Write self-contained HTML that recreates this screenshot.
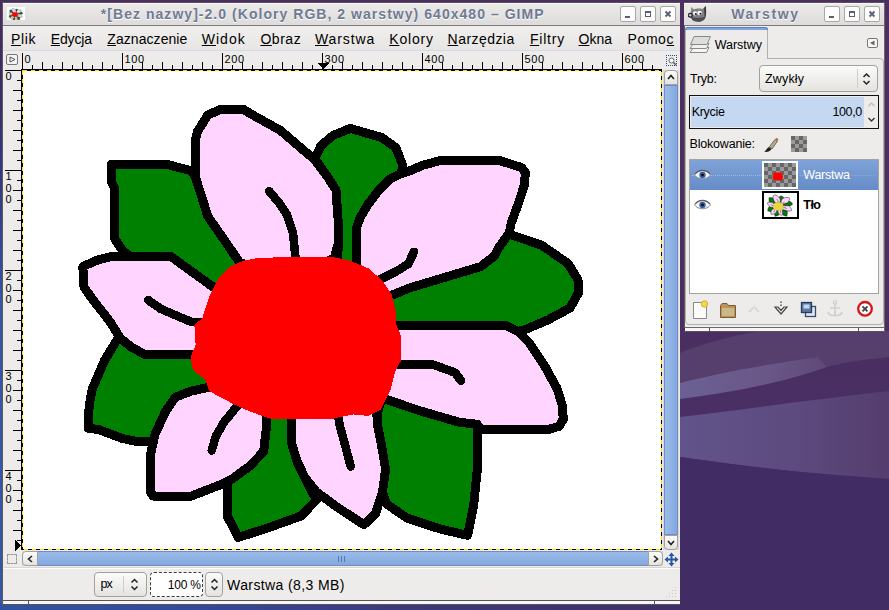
<!DOCTYPE html>
<html><head><meta charset="utf-8">
<style>
html,body{margin:0;padding:0;}
body{width:889px;height:610px;overflow:hidden;position:relative;background:#4b2d60;font-family:"Liberation Sans",sans-serif;}
.abs{position:absolute;}
.t{position:absolute;white-space:nowrap;color:#000;line-height:1;transform-origin:0 0;}
.win{background:#edecea;}
.titlebar{left:0;top:0;height:22px;background:linear-gradient(#ecebea,#dddcda);border-bottom:1px solid #7d7b80;box-shadow:inset 0 1px 0 #f8f8f7;}
.wbtn{position:absolute;width:14px;height:14px;background:#fcfcfc;border:1px solid #a9a7a2;border-radius:2px;}
.menubar{left:0;top:23px;height:24px;background:linear-gradient(#f0efed,#e7e6e4);border-bottom:1px solid #d5dbe6;}
.btn{position:absolute;background:linear-gradient(#fbfbfa,#e4e3e0);border:1px solid #a3a19b;border-radius:4px;box-sizing:border-box;}
.sb{position:absolute;background:linear-gradient(#9dbdeb,#86a9df);}
</style></head><body>

<svg class="abs" style="left:0;top:0" width="889" height="610">
<defs>
<linearGradient id="lg" x1="0" y1="0" x2="0" y2="1"><stop offset="0" stop-color="#4a2c5e"/><stop offset="0.12" stop-color="#3a2c62"/><stop offset="0.3" stop-color="#333a80"/><stop offset="0.5" stop-color="#3556a4"/><stop offset="1" stop-color="#3458a6"/></linearGradient>
<linearGradient id="sw1" x1="0" y1="0" x2="1" y2="0"><stop offset="0" stop-color="#6b6094"/><stop offset="0.6" stop-color="#6a5787"/><stop offset="1" stop-color="#5f4877"/></linearGradient>
<linearGradient id="sw2" x1="0" y1="0" x2="1" y2="0"><stop offset="0" stop-color="#61548b"/><stop offset="0.55" stop-color="#5d4a7e"/><stop offset="1" stop-color="#553d6e"/></linearGradient>
<linearGradient id="dk" x1="0" y1="0" x2="0" y2="1"><stop offset="0" stop-color="#4c2e60"/><stop offset="0.5" stop-color="#4c2e60"/><stop offset="1" stop-color="#42306a"/></linearGradient>
<linearGradient id="bs" x1="0" y1="0" x2="1" y2="0"><stop offset="0" stop-color="#2f53a2"/><stop offset="0.3" stop-color="#35489a"/><stop offset="0.6" stop-color="#3d3878"/><stop offset="1" stop-color="#402f68"/></linearGradient>
</defs>
<rect x="0" y="0" width="889" height="610" fill="url(#dk)"/>
<rect x="0" y="0" width="10" height="610" fill="url(#lg)"/>
<rect x="0" y="604" width="684" height="6" fill="url(#bs)"/>
<!-- right desktop swooshes -->
<path d="M680,353 C700,345 730,335 765,331 L889,331 L889,357 C860,360 840,363 827,367 L818,357 C790,361 740,368 680,383 Z" fill="#563f6d"/>
<path d="M680,383 C740,368 790,361 818,357 L827,367 C800,376 760,389 680,399 Z" fill="url(#sw1)"/>
<path d="M680,417 C754,408 818,399 889,391 L889,479 C850,476 790,473 682,457 L680,457 Z" fill="url(#sw2)"/>
<path d="M680,457 C790,473 850,476 889,479 L889,610 L680,610 Z" fill="#412d63"/>
</svg>

<div class="abs win" style="left:2px;top:3px;width:678px;height:602px;border-left:1px solid #5a5862;box-sizing:border-box"></div>
<div class="abs titlebar" style="left:3px;top:3px;width:677px"></div>
<div class="abs" style="left:2px;top:2px;width:678px;height:1px;background:#55535c"></div><div class="abs" style="left:684px;top:2px;width:201px;height:1px;background:#55535c"></div>
<svg class="abs" style="left:7px;top:7px" width="18" height="13"><rect width="18" height="13" fill="#fff"/><g transform="translate(0.3,0.3) scale(0.0275) translate(-22,-70)"><use href="#fl"/><use href="#blob" fill="#f00" stroke="#f00"/></g></svg>
<div class="wbtn" style="left:620px;top:6px"></div><div class="abs" style="left:625px;top:16px;width:5px;height:2px;background:#5a5f74"></div><div class="wbtn" style="left:640px;top:6px"></div><div class="abs" style="left:645px;top:11px;width:4px;height:3px;border:1px solid #5a5f74;border-top-width:2px"></div><div class="wbtn" style="left:660px;top:6px"></div><svg class="abs" style="left:664px;top:10px" width="8" height="8"><path d="M1.5,1.5 L6.5,6.5 M6.5,1.5 L1.5,6.5" stroke="#5a5f74" stroke-width="1.8"/></svg>
<div class="abs menubar" style="left:3px;top:3px;width:677px;margin-top:23px;top:3px"></div>
<div class="abs" style="left:4px;top:51px;width:676px;height:19px;background:#edecea"></div>
<svg class="abs" style="left:0;top:0" width="700" height="570" shape-rendering="crispEdges"><rect x="22" y="53" width="1" height="17" fill="#000"/><rect x="32" y="65" width="1" height="5" fill="#000"/><rect x="42" y="62" width="1" height="8" fill="#000"/><rect x="52" y="65" width="1" height="5" fill="#000"/><rect x="62" y="62" width="1" height="8" fill="#000"/><rect x="72" y="65" width="1" height="5" fill="#000"/><rect x="82" y="62" width="1" height="8" fill="#000"/><rect x="92" y="65" width="1" height="5" fill="#000"/><rect x="102" y="62" width="1" height="8" fill="#000"/><rect x="112" y="65" width="1" height="5" fill="#000"/><rect x="122" y="53" width="1" height="17" fill="#000"/><rect x="132" y="65" width="1" height="5" fill="#000"/><rect x="142" y="62" width="1" height="8" fill="#000"/><rect x="152" y="65" width="1" height="5" fill="#000"/><rect x="162" y="62" width="1" height="8" fill="#000"/><rect x="172" y="65" width="1" height="5" fill="#000"/><rect x="182" y="62" width="1" height="8" fill="#000"/><rect x="192" y="65" width="1" height="5" fill="#000"/><rect x="202" y="62" width="1" height="8" fill="#000"/><rect x="212" y="65" width="1" height="5" fill="#000"/><rect x="222" y="53" width="1" height="17" fill="#000"/><rect x="232" y="65" width="1" height="5" fill="#000"/><rect x="242" y="62" width="1" height="8" fill="#000"/><rect x="252" y="65" width="1" height="5" fill="#000"/><rect x="262" y="62" width="1" height="8" fill="#000"/><rect x="272" y="65" width="1" height="5" fill="#000"/><rect x="282" y="62" width="1" height="8" fill="#000"/><rect x="292" y="65" width="1" height="5" fill="#000"/><rect x="302" y="62" width="1" height="8" fill="#000"/><rect x="312" y="65" width="1" height="5" fill="#000"/><rect x="322" y="53" width="1" height="17" fill="#000"/><rect x="332" y="65" width="1" height="5" fill="#000"/><rect x="342" y="62" width="1" height="8" fill="#000"/><rect x="352" y="65" width="1" height="5" fill="#000"/><rect x="362" y="62" width="1" height="8" fill="#000"/><rect x="372" y="65" width="1" height="5" fill="#000"/><rect x="382" y="62" width="1" height="8" fill="#000"/><rect x="392" y="65" width="1" height="5" fill="#000"/><rect x="402" y="62" width="1" height="8" fill="#000"/><rect x="412" y="65" width="1" height="5" fill="#000"/><rect x="422" y="53" width="1" height="17" fill="#000"/><rect x="432" y="65" width="1" height="5" fill="#000"/><rect x="442" y="62" width="1" height="8" fill="#000"/><rect x="452" y="65" width="1" height="5" fill="#000"/><rect x="462" y="62" width="1" height="8" fill="#000"/><rect x="472" y="65" width="1" height="5" fill="#000"/><rect x="482" y="62" width="1" height="8" fill="#000"/><rect x="492" y="65" width="1" height="5" fill="#000"/><rect x="502" y="62" width="1" height="8" fill="#000"/><rect x="512" y="65" width="1" height="5" fill="#000"/><rect x="522" y="53" width="1" height="17" fill="#000"/><rect x="532" y="65" width="1" height="5" fill="#000"/><rect x="542" y="62" width="1" height="8" fill="#000"/><rect x="552" y="65" width="1" height="5" fill="#000"/><rect x="562" y="62" width="1" height="8" fill="#000"/><rect x="572" y="65" width="1" height="5" fill="#000"/><rect x="582" y="62" width="1" height="8" fill="#000"/><rect x="592" y="65" width="1" height="5" fill="#000"/><rect x="602" y="62" width="1" height="8" fill="#000"/><rect x="612" y="65" width="1" height="5" fill="#000"/><rect x="622" y="53" width="1" height="17" fill="#000"/><rect x="632" y="65" width="1" height="5" fill="#000"/><rect x="642" y="62" width="1" height="8" fill="#000"/><rect x="652" y="65" width="1" height="5" fill="#000"/><rect x="5" y="70" width="17" height="1" fill="#000"/><rect x="17" y="80" width="5" height="1" fill="#000"/><rect x="13" y="90" width="9" height="1" fill="#000"/><rect x="17" y="100" width="5" height="1" fill="#000"/><rect x="13" y="110" width="9" height="1" fill="#000"/><rect x="17" y="120" width="5" height="1" fill="#000"/><rect x="13" y="130" width="9" height="1" fill="#000"/><rect x="17" y="140" width="5" height="1" fill="#000"/><rect x="13" y="150" width="9" height="1" fill="#000"/><rect x="17" y="160" width="5" height="1" fill="#000"/><rect x="5" y="170" width="17" height="1" fill="#000"/><rect x="17" y="180" width="5" height="1" fill="#000"/><rect x="13" y="190" width="9" height="1" fill="#000"/><rect x="17" y="200" width="5" height="1" fill="#000"/><rect x="13" y="210" width="9" height="1" fill="#000"/><rect x="17" y="220" width="5" height="1" fill="#000"/><rect x="13" y="230" width="9" height="1" fill="#000"/><rect x="17" y="240" width="5" height="1" fill="#000"/><rect x="13" y="250" width="9" height="1" fill="#000"/><rect x="17" y="260" width="5" height="1" fill="#000"/><rect x="5" y="270" width="17" height="1" fill="#000"/><rect x="17" y="280" width="5" height="1" fill="#000"/><rect x="13" y="290" width="9" height="1" fill="#000"/><rect x="17" y="300" width="5" height="1" fill="#000"/><rect x="13" y="310" width="9" height="1" fill="#000"/><rect x="17" y="320" width="5" height="1" fill="#000"/><rect x="13" y="330" width="9" height="1" fill="#000"/><rect x="17" y="340" width="5" height="1" fill="#000"/><rect x="13" y="350" width="9" height="1" fill="#000"/><rect x="17" y="360" width="5" height="1" fill="#000"/><rect x="5" y="370" width="17" height="1" fill="#000"/><rect x="17" y="380" width="5" height="1" fill="#000"/><rect x="13" y="390" width="9" height="1" fill="#000"/><rect x="17" y="400" width="5" height="1" fill="#000"/><rect x="13" y="410" width="9" height="1" fill="#000"/><rect x="17" y="420" width="5" height="1" fill="#000"/><rect x="13" y="430" width="9" height="1" fill="#000"/><rect x="17" y="440" width="5" height="1" fill="#000"/><rect x="13" y="450" width="9" height="1" fill="#000"/><rect x="17" y="460" width="5" height="1" fill="#000"/><rect x="5" y="470" width="17" height="1" fill="#000"/><rect x="17" y="480" width="5" height="1" fill="#000"/><rect x="13" y="490" width="9" height="1" fill="#000"/><rect x="17" y="500" width="5" height="1" fill="#000"/><rect x="13" y="510" width="9" height="1" fill="#000"/><rect x="17" y="520" width="5" height="1" fill="#000"/><rect x="13" y="530" width="9" height="1" fill="#000"/><rect x="17" y="540" width="5" height="1" fill="#000"/><polygon points="318,63 329,63 323.5,69.5" fill="#000"/><rect x="21" y="69" width="641" height="1" fill="#000"/><rect x="21" y="69" width="1" height="481" fill="#000"/><polygon points="15,540 15,551 21,545.5" fill="#000"/></svg>
<div class="abs" style="left:6px;top:54px;width:12px;height:11px;border:1px solid #777;border-radius:2px;box-sizing:border-box;background:#f4f4f3"></div><svg class="abs" style="left:9px;top:56px" width="7" height="7"><polygon points="1,1 6,3.5 1,6" fill="none" stroke="#555" stroke-width="1"/></svg>
<div class="abs" style="left:666px;top:55px;width:11px;height:11px;border:1px dotted #2a4a8a;box-sizing:border-box"></div><svg class="abs" style="left:668px;top:57px" width="9" height="9"><circle cx="3.5" cy="3.5" r="2.5" fill="#fff" stroke="#666" stroke-width="1"/><path d="M5.5,5.5 L8,8" stroke="#555" stroke-width="1.5"/></svg>
<svg class="abs" style="left:22px;top:70px;background:#fff" width="640" height="480" viewBox="22 70 640 480" shape-rendering="crispEdges">
<g id="fl">
<polygon points="111.5,164.2 166.0,164.2 190.5,170.5 195.0,176.0 201.6,196.2 207.7,216.2 226.0,242.5 240.0,263.0 235.0,295.0 215.8,289.0 171.2,256.7 130.7,256.7 122.6,250.6 114.5,238.5 114.5,188.0 111.5,182.0" fill="#008000" stroke="#000" stroke-width="9" stroke-linejoin="round"/>
<polygon points="116.6,340.5 104.4,360.7 92.3,389.0 89.2,405.3 88.2,428.3 98.3,429.4 122.6,438.5 136.8,441.5 153.0,441.5 155.0,434.4 165.2,412.0 175.3,397.2 191.5,391.0 215.0,386.0 210.0,354.7 145.0,354.7 130.7,346.6 120.6,338.5" fill="#008000" stroke="#000" stroke-width="9" stroke-linejoin="round"/>
<polygon points="227.2,481.7 227.2,516.0 238.3,537.4 266.7,528.3 301.0,516.0 316.3,500.0 305.0,477.6 297.0,461.4 291.0,441.2 291.0,405.0 267.0,405.0 266.7,425.0 263.7,451.3 250.5,465.5 232.0,479.0" fill="#008000" stroke="#000" stroke-width="9" stroke-linejoin="round"/>
<polygon points="382.0,398.0 378.0,411.0 377.5,425.0 381.5,445.2 385.6,469.5 382.5,491.8 386.6,504.0 406.8,518.0 441.2,529.3 467.6,535.3 473.6,506.0 477.7,465.5 477.7,429.0 477.3,424.3 459.0,422.2 420.6,411.0" fill="#008000" stroke="#000" stroke-width="9" stroke-linejoin="round"/>
<polygon points="385.0,298.0 410.0,287.8 480.9,266.5 495.0,255.4 499.0,247.3 509.2,233.0 513.0,235.5 541.6,245.2 568.0,263.5 578.0,279.7 579.0,291.8 570.0,308.0 547.7,320.0 523.4,330.3 517.3,331.3 505.0,325.2 385.0,325.2" fill="#008000" stroke="#000" stroke-width="9" stroke-linejoin="round"/>
<polygon points="314.8,158.8 320.9,145.6 333.0,135.5 350.2,128.4 381.6,137.5 395.8,147.6 402.9,165.9 401.0,173.5 390.0,179.0 379.0,190.0 367.5,205.0 360.0,218.0 356.3,228.5 356.3,270.0 337.0,268.0 338.5,242.6 338.0,218.0 335.0,190.0 327.0,176.0" fill="#008000" stroke="#000" stroke-width="9" stroke-linejoin="round"/>
<polygon points="240.0,263.0 226.0,242.5 207.7,216.2 201.6,196.2 195.0,176.0 195.0,141.6 197.5,131.4 207.7,115.2 219.8,109.6 244.0,109.6 250.0,113.5 280.4,130.4 314.8,159.8 327.0,176.0 336.0,190.0 338.0,218.0 338.5,242.6 334.4,257.8 300.0,275.0" fill="#ffd5ff" stroke="#000" stroke-width="9" stroke-linejoin="round"/>
<polygon points="110.5,256.7 98.3,259.7 82.8,266.5 84.0,287.0 93.0,300.0 102.5,312.0 110.8,323.0 120.6,338.5 130.7,346.6 145.0,354.7 205.0,354.7 225.0,300.0 215.8,289.0 171.2,256.7" fill="#ffd5ff" stroke="#000" stroke-width="9" stroke-linejoin="round"/>
<polygon points="215.0,386.0 191.5,391.0 175.3,397.2 165.2,412.0 155.0,434.4 150.0,456.7 150.0,491.0 153.0,496.0 191.5,496.0 219.8,485.0 232.0,479.0 250.5,465.5 263.7,451.3 266.7,425.0 267.0,405.0 240.0,395.0" fill="#ffd5ff" stroke="#000" stroke-width="9" stroke-linejoin="round"/>
<polygon points="291.0,405.0 291.0,441.2 297.0,461.4 305.0,477.6 316.3,491.8 335.5,506.0 363.9,524.7 375.4,514.0 382.5,491.8 385.6,469.5 381.5,445.2 377.5,425.0 376.0,400.0" fill="#ffd5ff" stroke="#000" stroke-width="9" stroke-linejoin="round"/>
<polygon points="385.0,325.2 505.7,325.2 518.7,332.0 528.8,342.3 545.0,366.6 557.2,388.8 562.2,405.0 563.3,419.2 559.2,426.3 549.0,429.3 480.2,429.3 477.3,424.3 459.0,422.2 420.6,411.0 382.0,398.0 375.0,360.0" fill="#ffd5ff" stroke="#000" stroke-width="9" stroke-linejoin="round"/>
<polygon points="356.3,270.0 356.3,228.5 360.0,218.0 367.5,205.0 379.0,190.0 390.0,179.0 399.8,174.0 412.0,170.0 422.0,165.5 430.0,163.4 440.4,160.4 499.0,160.4 521.4,167.5 525.4,172.5 524.4,184.7 519.3,200.9 511.2,223.0 509.2,233.0 499.0,247.3 495.0,255.4 480.9,266.5 410.0,287.8 385.0,298.0" fill="#ffd5ff" stroke="#000" stroke-width="9" stroke-linejoin="round"/>
<polyline points="269.0,191.0 280.0,204.0 287.0,215.0 293.0,233.0 295.5,258.0" fill="none" stroke="#000" stroke-width="8.6" stroke-linejoin="round" stroke-linecap="round"/>
<polyline points="148.0,300.0 161.0,309.0 175.0,315.0 191.5,322.0 205.0,322.0" fill="none" stroke="#000" stroke-width="8.6" stroke-linejoin="round" stroke-linecap="round"/>
<polyline points="238.0,405.0 223.9,422.3 215.8,436.4 211.7,450.6" fill="none" stroke="#000" stroke-width="8.6" stroke-linejoin="round" stroke-linecap="round"/>
<polyline points="336.0,400.0 339.6,425.0 345.7,447.3 350.7,466.5" fill="none" stroke="#000" stroke-width="8.6" stroke-linejoin="round" stroke-linecap="round"/>
<polyline points="385.0,364.5 432.8,364.5 455.0,372.6 461.0,380.7" fill="none" stroke="#000" stroke-width="8.6" stroke-linejoin="round" stroke-linecap="round"/>
<polyline points="414.0,251.8 408.3,263.9 397.0,271.0 375.0,282.0" fill="none" stroke="#000" stroke-width="8.6" stroke-linejoin="round" stroke-linecap="round"/>
</g>
<defs><polygon id="blob" points="258.9,258.7 331.7,257.7 349.9,261.7 368.1,269.3 381.8,281.4 390.9,295.1 395.4,314.8 394.8,323.9 400.0,336.0 400.0,360.3 393.9,372.4 389.3,390.6 380.2,408.8 368.1,414.9 352.9,413.4 331.7,417.9 271.0,417.9 249.8,410.4 233.1,402.8 210.3,390.6 205.8,378.5 193.7,369.4 191.5,357.3 196.7,345.1 195.4,325.5 203.3,318.5 206.5,308.0 210.3,296.6 219.4,278.4 230.0,267.8 243.7,261.7" stroke-width="2" stroke-linejoin="round"/></defs><use href="#blob" fill="#ff0000" stroke="#ff0000"/>
<rect x="22.5" y="70.5" width="639" height="479" fill="none" stroke="#000" stroke-width="1"/><rect x="22.5" y="70.5" width="639" height="479" fill="none" stroke="#ffe000" stroke-width="1" stroke-dasharray="4 4"/>
</svg>
<div class="abs" style="left:663px;top:70px;width:16px;height:480px;background:#d9d8d5"></div>
<div class="sb" style="left:664px;top:85px;width:14px;height:450px;background:linear-gradient(90deg,#9bbbea,#84a8de);border:1px solid #6d8fc5;box-sizing:border-box"></div>
<div class="btn" style="left:664px;top:70px;width:14px;height:15px;border-radius:4px 4px 0 0"></div><svg class="abs" style="left:667px;top:74px" width="8" height="6"><path d="M1,5 L4,1.5 L7,5" fill="none" stroke="#222" stroke-width="1.6"/></svg>
<div class="btn" style="left:664px;top:535px;width:14px;height:15px;border-radius:0 0 4px 4px"></div><svg class="abs" style="left:667px;top:540px" width="8" height="6"><path d="M1,1 L4,4.5 L7,1" fill="none" stroke="#222" stroke-width="1.6"/></svg>
<div class="abs" style="left:22px;top:551px;width:641px;height:15px;background:#d9d8d5"></div>
<div class="sb" style="left:37px;top:551px;width:612px;height:15px;background:linear-gradient(#9bbbea,#84a8de);border:1px solid #6d8fc5;box-sizing:border-box"></div>
<div class="btn" style="left:22px;top:551px;width:16px;height:15px;border-radius:4px 0 0 4px"></div><svg class="abs" style="left:27px;top:555px" width="6" height="8"><path d="M5,1 L1.5,4 L5,7" fill="none" stroke="#222" stroke-width="1.6"/></svg>
<div class="btn" style="left:648px;top:551px;width:15px;height:15px;border-radius:0 4px 4px 0"></div><svg class="abs" style="left:653px;top:555px" width="6" height="8"><path d="M1,1 L4.5,4 L1,7" fill="none" stroke="#222" stroke-width="1.6"/></svg>
<svg class="abs" style="left:337px;top:556px" width="8" height="6"><path d="M1.5,0 V6 M4.5,0 V6 M7.5,0 V6" stroke="#5577b5" stroke-width="1"/></svg>
<div class="abs" style="left:7px;top:554px;width:10px;height:10px;border:1px dashed #999;box-sizing:border-box"></div>
<svg class="abs" style="left:664px;top:552px" width="15" height="15" viewBox="0 0 15 15"><path d="M7.5,0.5 L10.5,4 H8.5 V6.5 H11 V4.5 L14.5,7.5 L11,10.5 V8.5 H8.5 V11 H10.5 L7.5,14.5 L4.5,11 H6.5 V8.5 H4 V10.5 L0.5,7.5 L4,4.5 V6.5 H6.5 V4 H4.5 Z" fill="#2a55a5"/></svg>
<div class="abs" style="left:4px;top:567px;width:676px;height:1px;background:#d8d6cf"></div><div class="abs" style="left:4px;top:568px;width:676px;height:1px;background:#fff"></div>
<div class="btn" style="left:94px;top:572px;width:53px;height:25px"></div><div class="abs" style="left:123px;top:576px;width:1px;height:17px;background:#cfcdc8"></div>
<svg class="abs" style="left:130px;top:578px" width="9" height="13"><path d="M1.5,4.5 L4.5,1.5 L7.5,4.5 M1.5,8.5 L4.5,11.5 L7.5,8.5" fill="none" stroke="#222" stroke-width="1.5"/></svg>
<div class="abs" style="left:150px;top:572px;width:53px;height:25px;background:#fff;border:1px dashed #3a3a3a;border-radius:4px;box-sizing:border-box"></div>
<div class="btn" style="left:205px;top:572px;width:18px;height:25px"></div><svg class="abs" style="left:210px;top:578px" width="9" height="13"><path d="M1.5,4.5 L4.5,1.5 L7.5,4.5 M1.5,8.5 L4.5,11.5 L7.5,8.5" fill="none" stroke="#222" stroke-width="1.5"/></svg>
<div class="abs" style="left:3px;top:600px;width:677px;height:1px;background:#55535a"></div><div class="abs" style="left:4px;top:601px;width:676px;height:3px;background:#f7f6f4"></div><div class="abs" style="left:3px;top:604px;width:677px;height:1px;background:#55535a"></div>
<div class="abs" style="left:28px;top:601px;width:1px;height:3px;background:#55535a"></div><div class="abs" style="left:654px;top:601px;width:1px;height:3px;background:#55535a"></div>
<svg class="abs" style="left:666px;top:586px" width="12" height="12"><g fill="#c9c7c2"><rect x="9" y="1" width="1" height="1"/><rect x="6" y="4" width="1" height="1"/><rect x="9" y="4" width="1" height="1"/><rect x="3" y="7" width="1" height="1"/><rect x="6" y="7" width="1" height="1"/><rect x="9" y="7" width="1" height="1"/><rect x="0" y="10" width="1" height="1"/><rect x="3" y="10" width="1" height="1"/><rect x="6" y="10" width="1" height="1"/><rect x="9" y="10" width="1" height="1"/></g></svg>
<!-- DOCK WINDOW -->
<div class="abs win" style="left:684px;top:3px;width:201px;height:325px;border-left:1px solid #5a5862;box-sizing:border-box"></div>
<div class="abs titlebar" style="left:684px;top:3px;width:201px"></div>
<!-- wilber -->
<svg class="abs" style="left:688px;top:5px" width="19" height="18" viewBox="0 0 19 18">
<path d="M3.3,2.1 L5.8,4.4 C8,3.2 12,3.2 14.4,3.9 L17.7,0.9 C18.3,4 18.2,8 17.9,11.1 C17.5,13 16.8,14.2 15.7,15 C14,16.5 12,16.8 10.1,16.7 C8,16.7 5.8,16.2 4.4,15 C3,13 2.6,10.5 2.7,8.2 Z" fill="#808080"/>
<path d="M3,11.5 C6,13.2 12,13.4 17.8,11.3 C17.4,13 16.8,14.2 15.7,15 C14,16.5 12,16.8 10.1,16.7 C8,16.7 5.8,16.2 4.4,15 C3.6,14 3.2,12.8 3,11.5 Z" fill="#4d4d55"/>
<path d="M16,3 L17.7,0.9 C18.3,4 18.2,8 17.9,11.1 L16.6,11.6 Z" fill="#3e3b44"/>
<ellipse cx="7.1" cy="8.3" rx="2" ry="2.1" fill="#fff"/><ellipse cx="11.6" cy="8" rx="2.2" ry="2.2" fill="#fff"/>
<circle cx="7.8" cy="8.9" r="1" fill="#111"/><circle cx="12.4" cy="8.8" r="1" fill="#111"/>
<ellipse cx="2.2" cy="10.2" rx="2" ry="1.9" fill="#c9c6cc" stroke="#2c2238" stroke-width="1.3"/>
</svg>
<div class="wbtn" style="left:824px;top:6px"></div><div class="abs" style="left:829px;top:16px;width:5px;height:2px;background:#5a5f74"></div>
<div class="wbtn" style="left:844px;top:6px"></div><div class="abs" style="left:849px;top:11px;width:4px;height:3px;border:1px solid #5a5f74;border-top-width:2px"></div>
<div class="wbtn" style="left:864px;top:6px"></div><svg class="abs" style="left:868px;top:10px" width="8" height="8"><path d="M1.5,1.5 L6.5,6.5 M6.5,1.5 L1.5,6.5" stroke="#5a5f74" stroke-width="1.8"/></svg>
<!-- notebook page -->
<div class="abs" style="left:685px;top:58px;width:199px;height:267px;border:1px solid #b3b1ab;border-radius:0 4px 4px 4px;box-sizing:border-box;background:#edecea"></div>
<!-- tab -->
<div class="abs" style="left:685px;top:27px;width:83px;height:32px;background:#edecea;border:1px solid #b3b1ab;border-bottom:none;border-radius:4px 4px 0 0;box-sizing:border-box"></div>
<div class="abs" style="left:685px;top:27px;width:83px;height:3px;background:#7fa5dc;border-radius:4px 4px 0 0;border:1px solid #5b82bd;border-bottom:none;box-sizing:border-box"></div>
<!-- layers icon -->
<svg class="abs" style="left:689px;top:34px" width="23" height="20" viewBox="0 0 23 20">
<polygon points="4.5,13.5 20,13.5 17.5,18.5 1,18.5" fill="#f6f6f5" stroke="#8a8a88" stroke-width="1"/>
<polygon points="4.5,9.5 20,9.5 17.5,14.5 1,14.5" fill="#f0f0ef" stroke="#8a8a88" stroke-width="1"/>
<polygon points="5,2.5 21.5,2.5 18,10.5 1.5,10.5" fill="#dcdddc" stroke="#8a8a88" stroke-width="1"/>
</svg>
<div class="abs" style="left:867px;top:38px;width:11px;height:10px;border:1px solid #777;border-radius:2px;box-sizing:border-box;background:#f7f7f6"></div>
<svg class="abs" style="left:869px;top:40px" width="7" height="7"><polygon points="5.5,0.5 5.5,5.5 1,3" fill="#666"/></svg>
<!-- Tryb -->
<div class="btn" style="left:759px;top:65px;width:119px;height:27px"></div>
<div class="abs" style="left:857px;top:69px;width:1px;height:19px;background:#cfcdc8"></div>
<svg class="abs" style="left:862px;top:72px" width="9" height="14"><path d="M1.5,5 L4.5,2 L7.5,5 M1.5,9 L4.5,12 L7.5,9" fill="none" stroke="#222" stroke-width="1.5"/></svg>
<!-- Krycie -->
<div class="abs" style="left:689px;top:95px;width:190px;height:34px;border:1px solid #111;box-sizing:border-box;background:#edecea"></div>
<div class="abs" style="left:691px;top:97px;width:173px;height:30px;background:#c5d8f1"></div>
<svg class="abs" style="left:867px;top:101px" width="9" height="22"><path d="M1.5,5 L4.5,2 L7.5,5" fill="none" stroke="#bbb" stroke-width="1.2"/><path d="M1.5,17 L4.5,20 L7.5,17" fill="none" stroke="#333" stroke-width="1.4"/></svg>
<!-- Blokowanie -->
<svg class="abs" style="left:763px;top:137px" width="17" height="16" viewBox="0 0 17 16"><path d="M1,14.5 C3,14.5 3.5,11 6,10 L8.5,12 C7,15 3,15.5 1,14.5 Z" fill="#222"/><path d="M6.5,9.5 L12,2.5 L14.5,4 L9,12 Z" fill="#b9a78a" stroke="#555" stroke-width="0.8"/><path d="M12,2.5 L13.5,0.8 L15.5,2 L14.5,4 Z" fill="#d36a2a"/></svg>
<svg class="abs" style="left:791px;top:136px" width="16" height="16" shape-rendering="crispEdges"><rect width="16" height="16" fill="#9a9a9a"/><g fill="#666"><rect x="0" y="0" width="4" height="4"/><rect x="8" y="0" width="4" height="4"/><rect x="4" y="4" width="4" height="4"/><rect x="12" y="4" width="4" height="4"/><rect x="0" y="8" width="4" height="4"/><rect x="8" y="8" width="4" height="4"/><rect x="4" y="12" width="4" height="4"/><rect x="12" y="12" width="4" height="4"/></g></svg>
<!-- layer list -->
<div class="abs" style="left:689px;top:159px;width:190px;height:135px;background:#fff;border:1px solid #a5a39d;box-sizing:border-box"></div>
<div class="abs" style="left:690px;top:160px;width:188px;height:30px;background:linear-gradient(#7fa3d8,#658cc8)"></div>
<div class="abs" style="left:692px;top:175px;width:70px;height:1px;border-top:1px dotted #9fb8e0"></div>
<div class="abs" style="left:800px;top:175px;width:76px;height:1px;border-top:1px dotted #88a8d8"></div>
<!-- eyes -->
<svg class="abs" style="left:694px;top:169px" width="17" height="12" viewBox="0 0 17 12"><path d="M0.5,6 C4,0.5 13,0.5 16.5,6 C13,11 4,11 0.5,6 Z" fill="#f4f4f4" stroke="#8a8f9a" stroke-width="1"/><circle cx="8.5" cy="6" r="3.2" fill="#3c62a8"/><circle cx="8.5" cy="6" r="1.4" fill="#111"/><path d="M1,5 C5,0 12,0 16,5" stroke="#555" stroke-width="1.2" fill="none"/></svg>
<svg class="abs" style="left:694px;top:199px" width="17" height="12" viewBox="0 0 17 12"><path d="M0.5,6 C4,0.5 13,0.5 16.5,6 C13,11 4,11 0.5,6 Z" fill="#f4f4f4" stroke="#8a8f9a" stroke-width="1"/><circle cx="8.5" cy="6" r="3.2" fill="#3c62a8"/><circle cx="8.5" cy="6" r="1.4" fill="#111"/><path d="M1,5 C5,0 12,0 16,5" stroke="#555" stroke-width="1.2" fill="none"/></svg>
<!-- thumbs -->
<svg class="abs" style="left:762px;top:161px" width="36" height="28" shape-rendering="crispEdges"><rect width="36" height="28" fill="#fff"/><rect x="2" y="2" width="32" height="24" fill="#9a9a9a"/><g fill="#666"><rect x="2" y="2" width="4" height="4"/><rect x="10" y="2" width="4" height="4"/><rect x="18" y="2" width="4" height="4"/><rect x="26" y="2" width="4" height="4"/><rect x="6" y="6" width="4" height="4"/><rect x="14" y="6" width="4" height="4"/><rect x="22" y="6" width="4" height="4"/><rect x="30" y="6" width="4" height="4"/><rect x="2" y="10" width="4" height="4"/><rect x="10" y="10" width="4" height="4"/><rect x="18" y="10" width="4" height="4"/><rect x="26" y="10" width="4" height="4"/><rect x="6" y="14" width="4" height="4"/><rect x="14" y="14" width="4" height="4"/><rect x="22" y="14" width="4" height="4"/><rect x="30" y="14" width="4" height="4"/><rect x="2" y="18" width="4" height="4"/><rect x="10" y="18" width="4" height="4"/><rect x="18" y="18" width="4" height="4"/><rect x="26" y="18" width="4" height="4"/><rect x="6" y="22" width="4" height="4"/><rect x="14" y="22" width="4" height="4"/><rect x="22" y="22" width="4" height="4"/><rect x="30" y="22" width="4" height="4"/></g><g transform="translate(2,2) scale(0.05) translate(-22,-70)" shape-rendering="auto"><use href="#blob" fill="#f00" stroke="#f00"/></g></svg>
<svg class="abs" style="left:762px;top:191px" width="37" height="28"><rect x="1" y="1" width="35" height="26" fill="#fff" stroke="#000" stroke-width="2"/><g transform="translate(2.5,2) scale(0.05) translate(-22,-70)"><use href="#fl"/><use href="#blob" fill="#e6d640" stroke="#e6d640"/></g></svg>
<!-- bottom buttons -->
<svg class="abs" style="left:690px;top:299px" width="190" height="22" viewBox="690 299 190 22">
<!-- new layer -->
<path d="M693.5,302.5 H703 L706.5,306 V318.5 H693.5 Z" fill="#fbfbfb" stroke="#8a8a88" stroke-width="1"/><circle cx="704.5" cy="304" r="3.2" fill="#f3d94a" stroke="#c5a617" stroke-width="0.8"/>
<!-- folder -->
<path d="M720.5,305.5 L722,303.5 H727 L728.5,305.5 H735.5 V317.5 H720.5 Z" fill="#b8935c" stroke="#7a5c2e" stroke-width="1"/><rect x="722" y="308" width="12" height="8" fill="#c9b98a"/>
<!-- up (disabled) -->
<path d="M749,312 L754,307 L759,312" fill="none" stroke="#d8d8d6" stroke-width="2"/><path d="M754,308 V303" stroke="#e0e0de" stroke-width="1.5" stroke-dasharray="1.5 1.5"/>
<!-- down -->
<path d="M775,307 L781,314 L787,307 L784,307 L781,310.5 L778,307 Z" fill="#fff" stroke="#444" stroke-width="1.2"/><path d="M781,306 V301" stroke="#555" stroke-width="1.5" stroke-dasharray="1.5 1.5"/>
<!-- duplicate -->
<rect x="805.5" y="306.5" width="10" height="10" fill="#dfe6f2" stroke="#3a4a6a" stroke-width="1.3"/><rect x="801.5" y="302.5" width="10" height="10" fill="#5a78a8" stroke="#2a3a5a" stroke-width="1.3"/><rect x="803.5" y="304.5" width="6" height="4" fill="#c5d5ea"/>
<!-- anchor (disabled) -->
<path d="M835,303 V316 M830,308 H840 M828,312 C829,317 841,317 842,312" fill="none" stroke="#cfcfcd" stroke-width="1.6"/><circle cx="835" cy="302.5" r="1.6" fill="none" stroke="#cfcfcd" stroke-width="1.2"/>
<!-- delete -->
<circle cx="865" cy="308.8" r="6.8" fill="#fff" stroke="#d0161b" stroke-width="2.3"/><path d="M862.5,306.3 L867.5,311.3 M867.5,306.3 L862.5,311.3" stroke="#444" stroke-width="1.9"/>
</svg>
<!-- dock bottom frame -->
<div class="abs" style="left:684px;top:327px;width:201px;height:1px;background:#6a686e"></div><div class="abs" style="left:685px;top:328px;width:199px;height:3px;background:#f7f6f4"></div><div class="abs" style="left:684px;top:331px;width:201px;height:1px;background:#55535a"></div>
<div class="abs" style="left:709px;top:328px;width:1px;height:3px;background:#55535a"></div><div class="abs" style="left:858px;top:328px;width:1px;height:3px;background:#55535a"></div>
<div class="abs" style="left:884px;top:3px;width:1px;height:329px;background:#6a686e"></div>

<div class="t" style="left:100.8px;top:6.9px;font-size:14px;letter-spacing:1.039px;font-weight:bold;color:#6f7a93;text-shadow:0 1px 0 #fff;">*[Bez nazwy]-2.0 (Kolory RGB, 2 warstwy) 640x480 – GIMP</div>
<div class="t" style="left:11.0px;top:31.6px;font-size:14px;letter-spacing:0.607px;"><u>P</u>lik</div>
<div class="t" style="left:50.8px;top:31.6px;font-size:14px;letter-spacing:-0.166px;"><u>E</u>dycja</div>
<div class="t" style="left:107.3px;top:31.6px;font-size:14px;letter-spacing:0.061px;"><u>Z</u>aznaczenie</div>
<div class="t" style="left:201.8px;top:31.6px;font-size:14px;letter-spacing:0.998px;"><u>W</u>idok</div>
<div class="t" style="left:260.4px;top:31.6px;font-size:14px;letter-spacing:0.544px;"><u>O</u>braz</div>
<div class="t" style="left:315.0px;top:31.6px;font-size:14px;letter-spacing:0.877px;"><u>W</u>arstwa</div>
<div class="t" style="left:389.3px;top:31.6px;font-size:14px;letter-spacing:0.799px;"><u>K</u>olory</div>
<div class="t" style="left:447.6px;top:31.6px;font-size:14px;letter-spacing:0.444px;"><u>N</u>arzędzia</div>
<div class="t" style="left:529.9px;top:31.6px;font-size:14px;letter-spacing:0.791px;"><u>F</u>iltry</div>
<div class="t" style="left:578.5px;top:31.6px;font-size:14px;letter-spacing:0.010px;"><u>O</u>kna</div>
<div class="t" style="left:627.6px;top:31.6px;font-size:14px;letter-spacing:0.580px;">Pomo<u>c</u></div>
<div class="t" style="left:24.5px;top:54.2px;font-size:11px;letter-spacing:0.375px;">0</div>
<div class="t" style="left:124.5px;top:54.2px;font-size:11px;letter-spacing:0.570px;">100</div>
<div class="t" style="left:224.5px;top:54.2px;font-size:11px;letter-spacing:0.570px;">200</div>
<div class="t" style="left:324.5px;top:54.2px;font-size:11px;letter-spacing:0.570px;">300</div>
<div class="t" style="left:424.5px;top:54.2px;font-size:11px;letter-spacing:0.570px;">400</div>
<div class="t" style="left:524.5px;top:54.2px;font-size:11px;letter-spacing:0.570px;">500</div>
<div class="t" style="left:624.5px;top:54.2px;font-size:11px;letter-spacing:0.570px;">600</div>
<div class="t" style="left:5.6px;top:71.4px;font-size:11px;letter-spacing:0.275px;">0</div>
<div class="t" style="left:5.6px;top:171.4px;font-size:11px;letter-spacing:0.275px;">1</div>
<div class="t" style="left:5.6px;top:182.5px;font-size:11px;letter-spacing:0.275px;">0</div>
<div class="t" style="left:5.6px;top:193.6px;font-size:11px;letter-spacing:0.275px;">0</div>
<div class="t" style="left:5.6px;top:271.4px;font-size:11px;letter-spacing:0.275px;">2</div>
<div class="t" style="left:5.6px;top:282.5px;font-size:11px;letter-spacing:0.275px;">0</div>
<div class="t" style="left:5.6px;top:293.6px;font-size:11px;letter-spacing:0.275px;">0</div>
<div class="t" style="left:5.6px;top:371.4px;font-size:11px;letter-spacing:0.275px;">3</div>
<div class="t" style="left:5.6px;top:382.5px;font-size:11px;letter-spacing:0.275px;">0</div>
<div class="t" style="left:5.6px;top:393.6px;font-size:11px;letter-spacing:0.275px;">0</div>
<div class="t" style="left:5.6px;top:471.4px;font-size:11px;letter-spacing:0.275px;">4</div>
<div class="t" style="left:5.6px;top:482.5px;font-size:11px;letter-spacing:0.275px;">0</div>
<div class="t" style="left:5.6px;top:493.6px;font-size:11px;letter-spacing:0.275px;">0</div>
<div class="t" style="left:100.5px;top:578.2px;font-size:12.5px;letter-spacing:-0.903px;">px</div>
<div class="t" style="left:167.7px;top:578.6px;font-size:12px;letter-spacing:-0.183px;">100 %</div>
<div class="t" style="left:227.1px;top:577.6px;font-size:14px;letter-spacing:0.393px;">Warstwa (8,3 MB)</div>
<div class="t" style="left:731.2px;top:7.2px;font-size:14px;letter-spacing:1.640px;font-weight:bold;color:#6f7a93;text-shadow:0 1px 0 #fff;">Warstwy</div>
<div class="t" style="left:714.8px;top:38.8px;font-size:12.5px;letter-spacing:-0.059px;">Warstwy</div>
<div class="t" style="left:690.0px;top:73.2px;font-size:12.5px;letter-spacing:-0.254px;">Tryb:</div>
<div class="t" style="left:765.0px;top:73.2px;font-size:12.5px;letter-spacing:0.159px;">Zwykły</div>
<div class="t" style="left:691.7px;top:106.0px;font-size:12.5px;letter-spacing:-0.287px;">Krycie</div>
<div class="t" style="left:832.4px;top:106.0px;font-size:12.5px;letter-spacing:-0.345px;">100,0</div>
<div class="t" style="left:689.5px;top:137.9px;font-size:12.5px;letter-spacing:-0.191px;">Blokowanie:</div>
<div class="t" style="left:803.3px;top:169.1px;font-size:12.5px;letter-spacing:-0.243px;color:#fff;">Warstwa</div>
<div class="t" style="left:803.3px;top:199.2px;font-size:12.5px;letter-spacing:-0.525px;font-weight:bold;">Tło</div>
</body></html>
